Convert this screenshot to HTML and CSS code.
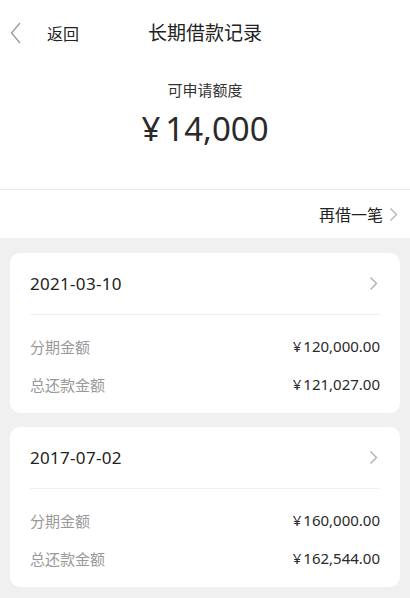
FILE: index.html
```html
<!DOCTYPE html>
<html lang="zh-CN">
<head>
    <meta charset="UTF-8">
    <meta name="viewport" content="width=device-width, initial-scale=1.0">
    <title>长期借款记录</title>
    <link rel="stylesheet" href="styles.css">
</head>
<body>
    <header class="nav">
        <a class="back" href="#">
            <svg class="back-icon" width="12" height="22" viewBox="0 0 12 22"><path d="M10 1 L1.5 11 L10 21" fill="none" stroke="#9a9a9a" stroke-width="1.3"/></svg>
            <span>返回</span>
        </a>
        <h1 class="title">长期借款记录</h1>
    </header>

    <section class="quota">
        <div class="quota-label">可申请额度</div>
        <div class="quota-amount"><span class="yen">¥</span>14,000</div>
    </section>

    <div class="action">
        <a href="#" class="borrow">再借一笔
            <svg width="9" height="15" viewBox="0 0 9 15"><path d="M1.5 1.5 L7.5 7.5 L1.5 13.5" fill="none" stroke="#b5b5b5" stroke-width="1.4"/></svg>
        </a>
    </div>

    <main class="list">
        <div class="card">
            <div class="card-head">
                <span class="date">2021-03-10</span>
                <svg width="9" height="15" viewBox="0 0 9 15"><path d="M1.5 1.5 L7.5 7.5 L1.5 13.5" fill="none" stroke="#b0b0b0" stroke-width="1.4"/></svg>
            </div>
            <div class="row"><span class="label">分期金额</span><span class="value"><span class="yen">¥</span>120,000.00</span></div>
            <div class="row"><span class="label">总还款金额</span><span class="value"><span class="yen">¥</span>121,027.00</span></div>
        </div>
        <div class="card">
            <div class="card-head">
                <span class="date">2017-07-02</span>
                <svg width="9" height="15" viewBox="0 0 9 15"><path d="M1.5 1.5 L7.5 7.5 L1.5 13.5" fill="none" stroke="#b0b0b0" stroke-width="1.4"/></svg>
            </div>
            <div class="row"><span class="label">分期金额</span><span class="value"><span class="yen">¥</span>160,000.00</span></div>
            <div class="row"><span class="label">总还款金额</span><span class="value"><span class="yen">¥</span>162,544.00</span></div>
        </div>
    </main>
</body>
</html>
```

FILE: styles.css
```css
body {
    margin: 0;
    font-family: "Noto Sans", "Noto Sans CJK SC", sans-serif;
    background-color: #f0f0f0;
    color: #222;
}
a {
    color: inherit;
    text-decoration: none;
}
.nav {
    position: relative;
    height: 64px;
    display: flex;
    align-items: center;
    justify-content: center;
    background-color: #fff;
}
.back {
    position: absolute;
    left: 10px;
    top: 21px;
    display: flex;
    align-items: center;
    font-size: 16px;
}
.back-icon {
    margin-right: 25px;
}
.title {
    margin: 0;
    font-size: 19px;
    font-weight: normal;
}
.quota {
    background-color: #fff;
    text-align: center;
    padding: 14px 0 36px;
    border-bottom: 1px solid #e8e8e8;
}
.quota-label {
    font-size: 15px;
    color: #333;
    line-height: 24px;
}
.quota-amount {
    font-size: 33px;
    line-height: 48px;
    margin-top: 3px;
    color: #2a2a2a;
}
.quota-amount .yen {
    margin-right: 5px;
}
.action {
    background-color: #fff;
    height: 48px;
    display: flex;
    align-items: center;
    justify-content: flex-end;
    padding-right: 12px;
}
.borrow {
    display: flex;
    align-items: center;
    gap: 6px;
    font-size: 16px;
}
.list {
    padding: 15px 10px;
    display: flex;
    flex-direction: column;
    gap: 14px;
}
.card {
    background-color: #fff;
    border-radius: 10px;
    padding: 0 20px 10px;
}
.card-head {
    height: 61px;
    display: flex;
    align-items: center;
    justify-content: space-between;
    border-bottom: 1px solid #f0f0f0;
    margin-bottom: 12px;
}
.date {
    font-size: 17px;
    letter-spacing: 0.3px;
}
.card-head svg {
    margin-right: 2px;
}
.row {
    height: 38px;
    display: flex;
    align-items: center;
    justify-content: space-between;
}
.label {
    font-size: 15px;
    color: #999;
}
.value {
    font-size: 15px;
    color: #2a2a2a;
}
.value .yen {
    margin-right: 2px;
}
```
